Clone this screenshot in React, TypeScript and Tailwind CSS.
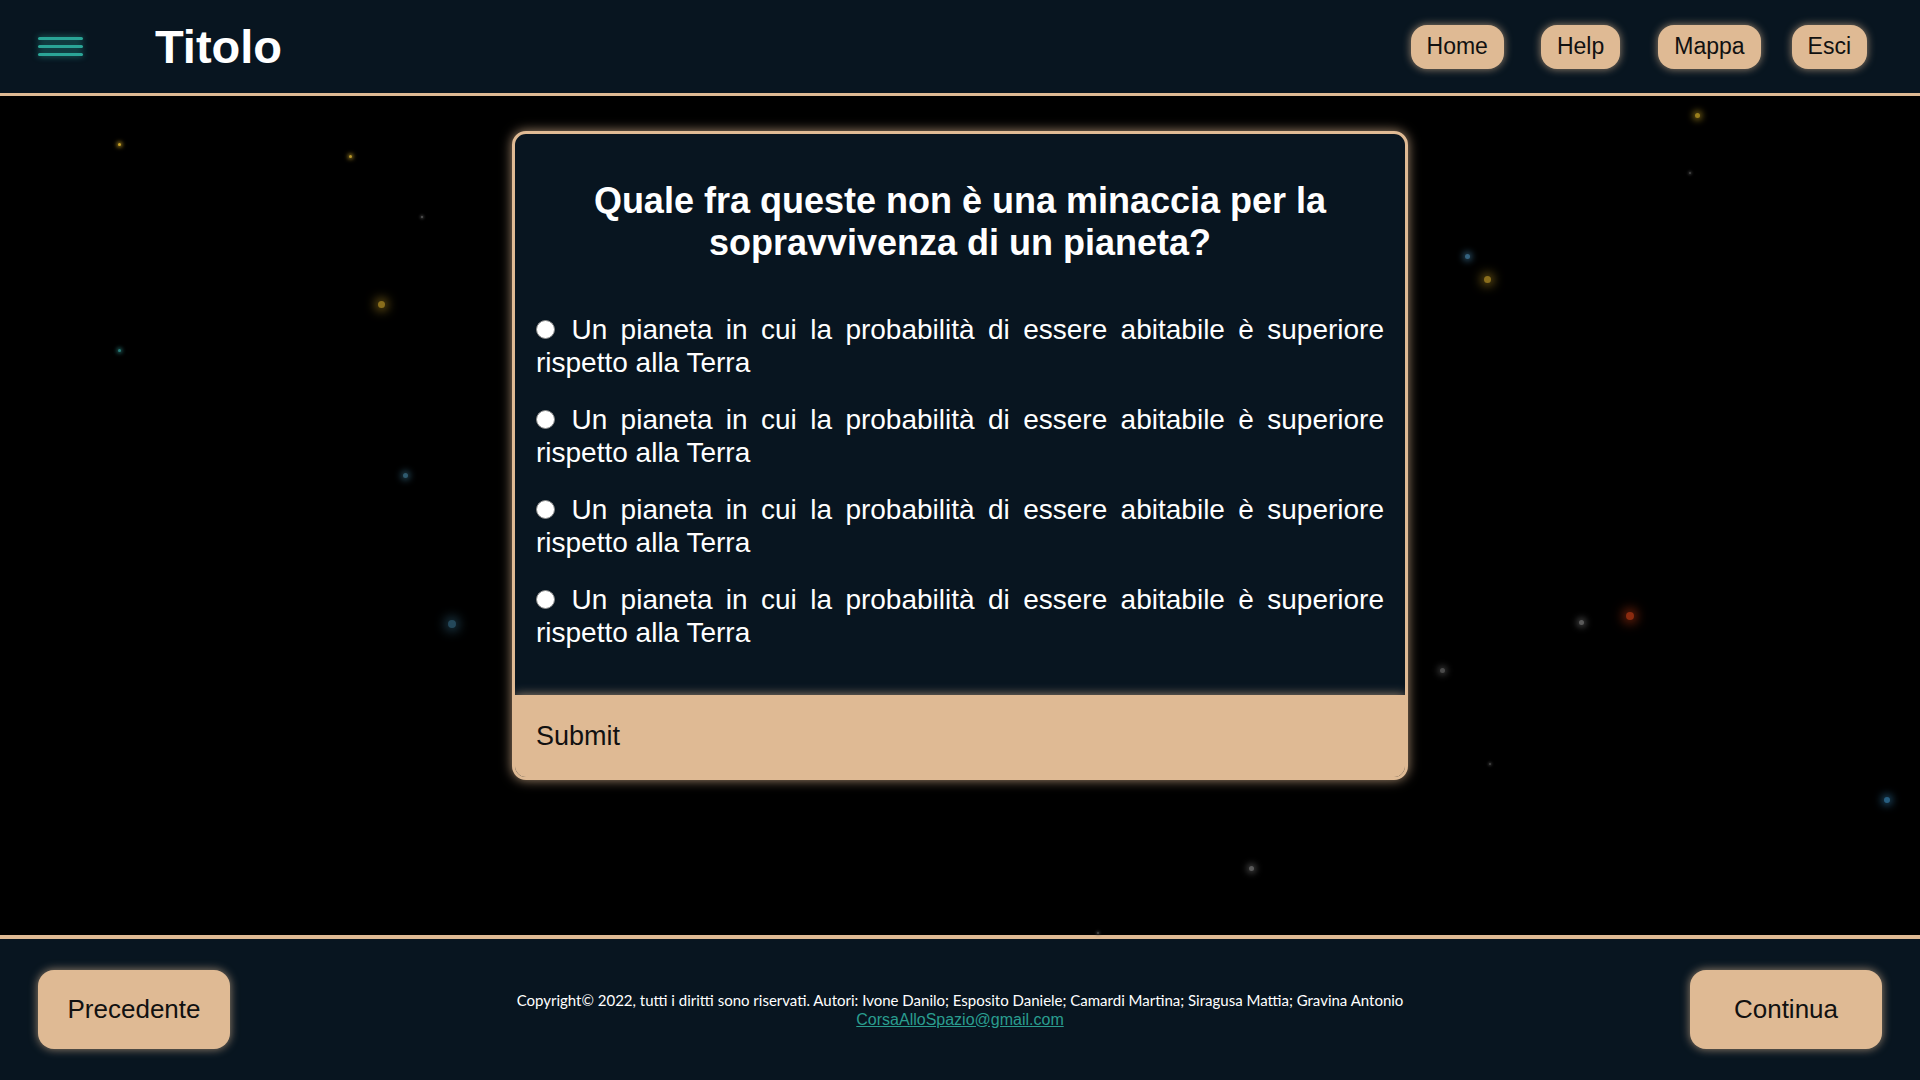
// Quiz page: starry background, question card with radio options, nav bars top and bottom.

const stars = [
  { x: 119, y: 144, s: 3, c: "#c9a227" },
  { x: 350, y: 156, s: 3, c: "#b8962a" },
  { x: 381, y: 304, s: 7, c: "#8a6e1c" },
  { x: 119, y: 350, s: 3, c: "#2a7d7a" },
  { x: 422, y: 217, s: 2, c: "#555" },
  { x: 405, y: 475, s: 5, c: "#2f5a6e" },
  { x: 452, y: 624, s: 8, c: "#24485a" },
  { x: 1697, y: 115, s: 5, c: "#9a7e1c" },
  { x: 1467, y: 256, s: 5, c: "#34627f" },
  { x: 1487, y: 279, s: 7, c: "#8a6e1c" },
  { x: 1690, y: 173, s: 2, c: "#444" },
  { x: 1581, y: 622, s: 5, c: "#5a5a5a" },
  { x: 1630, y: 616, s: 8, c: "#8a2a0e" },
  { x: 1442, y: 670, s: 5, c: "#4a4a4a" },
  { x: 1887, y: 800, s: 6, c: "#275e80" },
  { x: 1490, y: 764, s: 2, c: "#444" },
  { x: 1251, y: 868, s: 5, c: "#5a5a5a" },
  { x: 1098, y: 933, s: 2, c: "#444" },
];

const OPTION = "Un pianeta in cui la probabilità di essere abitabile è superiore rispetto alla Terra";

function NavButton({ label, className = "" }: { label: string; className?: string }) {
  return (
    <button
      className={
        "h-[44px] rounded-[16px] bg-[#dfba94] px-[16px] text-[23px] text-[#111] shadow-[0_0_8px_rgba(223,186,148,0.7)] " +
        className
      }
    >
      {label}
    </button>
  );
}

function FooterButton({ label }: { label: string }) {
  return (
    <button className="h-[79px] w-[192px] shrink-0 rounded-[16px] bg-[#dfba94] text-[26px] text-[#111] shadow-[0_0_10px_rgba(223,186,148,0.7)]">
      {label}
    </button>
  );
}

export default function App() {
  return (
    <div
      className="flex h-screen w-full flex-col overflow-hidden bg-black"
      style={{ fontFamily: '"Liberation Sans", Arial, sans-serif' }}
    >
      <header className="flex h-[96px] shrink-0 items-center border-b-[3px] border-[#dfba94] bg-[#081520]">
        <div className="ml-[38px] flex w-[45px] flex-col gap-[5px]">
          <span className="h-[3px] rounded-full bg-[#2ba597] shadow-[0_0_6px_rgba(43,165,151,0.8)]" />
          <span className="h-[3px] rounded-full bg-[#2ba597] shadow-[0_0_6px_rgba(43,165,151,0.8)]" />
          <span className="h-[3px] rounded-full bg-[#2ba597] shadow-[0_0_6px_rgba(43,165,151,0.8)]" />
        </div>
        <h1 className="ml-[72px] text-[47px] font-bold leading-none text-white">Titolo</h1>
        <nav className="ml-auto mr-[53px] flex items-center">
          <NavButton label="Home" />
          <NavButton label="Help" className="ml-[37px]" />
          <NavButton label="Mappa" className="ml-[38px]" />
          <NavButton label="Esci" className="ml-[31px]" />
        </nav>
      </header>

      <main className="relative flex-1 bg-black">
        {stars.map((st, i) => (
          <span
            key={i}
            className="absolute rounded-full"
            style={{
              left: st.x - st.s / 2,
              top: st.y - 96 - st.s / 2,
              width: st.s,
              height: st.s,
              background: st.c,
              boxShadow: `0 0 ${st.s * 1.5}px ${st.s / 3}px ${st.c}`,
            }}
          />
        ))}

        <div className="relative flex justify-center pt-[35px]">
          <section className="w-[896px] overflow-hidden rounded-[14px] border-[3px] border-[#dfba94] bg-[#081520] shadow-[0_0_12px_rgba(223,186,148,0.75)]">
            <h2 className="px-[22px] pt-[46px] text-center text-[36px] font-bold leading-[42px] text-white">
              Quale fra queste non è una minaccia per la sopravvivenza di un pianeta?
            </h2>
            <div className="mt-[49px] flex flex-col gap-[24px] px-[21px]">
              {[0, 1, 2, 3].map((i) => (
                <p key={i} className="text-justify text-[28px] leading-[33px] text-white">
                  <span className="mr-[3px] inline-block h-[19px] w-[19px] rounded-full border-[1.5px] border-[#8a8a8a] bg-white align-[0px]" />{" "}
                  {OPTION}
                </p>
              ))}
            </div>
            <div className="mt-[46px] flex h-[82px] items-center bg-[#dfba94] px-[21px] text-[27px] text-[#111] shadow-[0_0_10px_rgba(223,186,148,0.7)]">
              Submit
            </div>
          </section>
        </div>
      </main>

      <footer className="flex h-[145px] shrink-0 items-center border-t-[4px] border-[#dfba94] bg-[#081520] px-[38px]">
        <FooterButton label="Precedente" />
        <div className="flex-1 text-center leading-[20px] text-white">
          <p className="text-[15px]" style={{ fontFamily: "Lato, sans-serif" }}>
            Copyright© 2022, tutti i diritti sono riservati. Autori: Ivone Danilo; Esposito Daniele; Camardi Martina; Siragusa Mattia; Gravina Antonio
          </p>
          <a href="#" className="text-[16px] text-[#2a9d8f] underline">
            CorsaAlloSpazio@gmail.com
          </a>
        </div>
        <FooterButton label="Continua" />
      </footer>
    </div>
  );
}
